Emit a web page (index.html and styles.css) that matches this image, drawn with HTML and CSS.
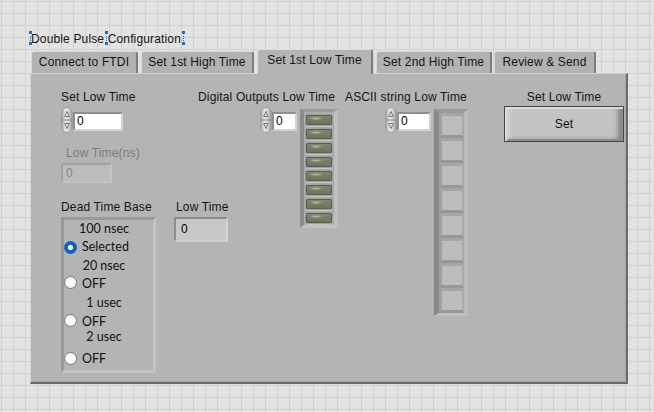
FILE: index.html
```html
<!DOCTYPE html>
<html>
<head>
<meta charset="utf-8">
<link rel="stylesheet" href="styles.css">
</head>
<body>
<div class="fp">
  <div class="title-row">
    <span class="title">Double Pulse Configuration<i class="hd hl1"></i><i class="hd hl2"></i><i class="hd hl3"></i><i class="hdl hd1"></i><i class="hdl hd2"></i><i class="hdl hd3"></i></span>
  </div>
  <div class="tabctl">
    <div class="tabs">
      <div class="tab t1">Connect to FTDI</div>
      <div class="tab t2">Set 1st High Time</div>
      <div class="tab t3 sel">Set 1st Low Time</div>
      <div class="tab t4">Set 2nd High Time</div>
      <div class="tab t5">Review &amp; Send</div>
    </div>
    <div class="page">
      <div class="colA">
        <div class="lbl">Set Low Time</div>
        <div class="numrow">
          <svg class="spin" width="12" height="26" viewBox="0 0 12 26"><defs><linearGradient id="sg1" x1="0" x2="1"><stop offset="0" stop-color="#9c9c9c"/><stop offset=".35" stop-color="#e9e9e9"/><stop offset=".7" stop-color="#d2d2d2"/><stop offset="1" stop-color="#8f8f8f"/></linearGradient></defs><rect x=".5" y=".5" width="11" height="25" rx="5.5" fill="url(#sg1)" stroke="#9d9d9d"/><line x1="1" y1="13" x2="11" y2="13" stroke="#8c8c8c"/><path d="M6 4.5 L8.3 9.5 H3.7Z" fill="none" stroke="#7a7a7a"/><path d="M6 21.5 L8.3 16.5 H3.7Z" fill="none" stroke="#7a7a7a"/></svg>
          <div class="num wA">0</div>
        </div>
        <div class="lbl dis">Low Time(ns)</div>
        <div class="disbox">0</div>
        <div class="dtrow">
          <div class="dtg">
            <div class="lbl">Dead Time Base</div>
            <div class="rbox">
              <div class="rl h18">100 nsec</div>
              <div class="ro h19"><span class="rd on m3"></span><span class="rt">Selected</span></div>
              <div class="rl h18">20 nsec</div>
              <div class="ro h19"><span class="rd m1"></span><span class="rt">OFF</span></div>
              <div class="rl h19">1 usec</div>
              <div class="ro h15"><span class="rd m1"></span><span class="rt">OFF</span></div>
              <div class="rl h22">2 usec</div>
              <div class="ro h18"><span class="rd m2"></span><span class="rt">OFF</span></div>
            </div>
          </div>
          <div class="ltg">
            <div class="lbl pl2">Low Time</div>
            <div class="ind">0</div>
          </div>
        </div>
      </div>
      <div class="colB">
        <div class="lbl">Digital Outputs Low Time</div>
        <div class="drow">
          <svg class="spin" width="12" height="26" viewBox="0 0 12 26"><defs><linearGradient id="sg2" x1="0" x2="1"><stop offset="0" stop-color="#9c9c9c"/><stop offset=".35" stop-color="#e9e9e9"/><stop offset=".7" stop-color="#d2d2d2"/><stop offset="1" stop-color="#8f8f8f"/></linearGradient></defs><rect x=".5" y=".5" width="11" height="25" rx="5.5" fill="url(#sg2)" stroke="#9d9d9d"/><line x1="1" y1="13" x2="11" y2="13" stroke="#8c8c8c"/><path d="M6 4.5 L8.3 9.5 H3.7Z" fill="none" stroke="#7a7a7a"/><path d="M6 21.5 L8.3 16.5 H3.7Z" fill="none" stroke="#7a7a7a"/></svg>
          <div class="num wB">0</div>
          <div class="ledf">
            <div class="led"></div><div class="led"></div><div class="led"></div><div class="led"></div>
            <div class="led"></div><div class="led"></div><div class="led"></div><div class="led"></div>
          </div>
        </div>
      </div>
      <div class="colC">
        <div class="lbl">ASCII string Low Time</div>
        <div class="drow">
          <svg class="spin" width="12" height="26" viewBox="0 0 12 26"><defs><linearGradient id="sg3" x1="0" x2="1"><stop offset="0" stop-color="#9c9c9c"/><stop offset=".35" stop-color="#e9e9e9"/><stop offset=".7" stop-color="#d2d2d2"/><stop offset="1" stop-color="#8f8f8f"/></linearGradient></defs><rect x=".5" y=".5" width="11" height="25" rx="5.5" fill="url(#sg3)" stroke="#9d9d9d"/><line x1="1" y1="13" x2="11" y2="13" stroke="#8c8c8c"/><path d="M6 4.5 L8.3 9.5 H3.7Z" fill="none" stroke="#7a7a7a"/><path d="M6 21.5 L8.3 16.5 H3.7Z" fill="none" stroke="#7a7a7a"/></svg>
          <div class="num wC">0</div>
          <div class="arrf">
            <div class="cell"></div><div class="cell"></div><div class="cell"></div><div class="cell"></div>
            <div class="cell"></div><div class="cell"></div><div class="cell"></div><div class="cell"></div>
          </div>
        </div>
      </div>
      <div class="colD">
        <div class="lbl center">Set Low Time</div>
        <div class="btn">Set</div>
      </div>
    </div>
  </div>
</div>
</body>
</html>
```
FILE: styles.css
```css
html, body {
  margin: 0;
  padding: 0;
}
body {
  width: 654px;
  height: 412px;
  overflow: hidden;
  background-color: #e3e3e3;
  background-image:
    linear-gradient(to right, #d1d1d1 1px, transparent 1px),
    linear-gradient(to bottom, #d1d1d1 1px, transparent 1px);
  background-size: 12px 12px;
  background-position: 1px 1px;
  font: 12px "Liberation Sans", Arial, sans-serif;
  letter-spacing: 0.15px;
  color: #141414;
}
.fp {
  padding: 31px 0 0 30px;
}
.title-row {
  height: 16px;
}
.title {
  position: relative;
  display: inline-block;
  line-height: 16px;
  padding-left: 1px;
  white-space: nowrap;
}
.hd {
  position: absolute;
  width: 3px;
  height: 3px;
  background: #1a6cd0;
}
.hdl {
  position: absolute;
  top: 5px;
  height: 5px;
  width: 0;
  border-left: 1px dotted #1a6cd0;
}
.hl1 { left: -1px; top: 0; box-shadow: 0 11px 0 #1a6cd0; }
.hl2 { left: 75px; top: 0; box-shadow: 0 11px 0 #1a6cd0; }
.hl3 { left: 152px; top: 0; box-shadow: 0 11px 0 #1a6cd0; }
.hd1 { left: 0; }
.hd2 { left: 76px; }
.hd3 { left: 153px; }

.tabs {
  display: flex;
  align-items: flex-end;
  height: 24px;
  margin-top: 2px;
  padding-left: 1px;
}
.tab {
  box-sizing: border-box;
  height: 22px;
  line-height: 21px;
  background: #b2b2b2;
  border-top: 1px solid #d9d9d9;
  border-left: 1px solid #d9d9d9;
  border-right: 2px solid #7d7d7d;
  border-radius: 3px 3px 0 0;
  text-align: center;
  white-space: nowrap;
  margin-right: 3px;
  flex: none;
}
.tab.sel {
  height: 25px;
  line-height: 20px;
  margin-bottom: -1px;
  background: #b4b4b4;
  position: relative;
  z-index: 1;
  border-top-color: #dcdcdc;
  border-left-color: #dcdcdc;
}
.t1 { width: 107px; }
.t2 { width: 113px; }
.t3 { width: 116px; }
.t4 { width: 116px; margin-right: 2px; }
.t5 { width: 102px; }

.page {
  box-sizing: border-box;
  width: 598px;
  height: 311px;
  background: #b4b4b4;
  border-top: 1px solid #d3d3d3;
  border-left: 1px solid #d3d3d3;
  border-right: 2px solid #6c6c6c;
  border-bottom: 2px solid #6c6c6c;
  box-shadow: inset -1px -1px 0 #a6a6a6;
  padding: 16px 0 0 30px;
  display: flex;
  align-items: flex-start;
}
.lbl {
  height: 14px;
  line-height: 14px;
  white-space: nowrap;
}
.lbl.center { text-align: center; }
.lbl.dis {
  margin-top: 13px;
  padding-left: 5px;
  color: #7b7b7b;
}
.pl2 { padding-left: 2px; }

.colA { width: 137px; flex: none; }
.colB { width: 140px; flex: none; }
.colC { width: 123px; flex: none; margin-left: 7px; }
.colD { width: 120px; flex: none; margin-left: 36px; }

.numrow {
  display: flex;
  align-items: flex-start;
  margin-top: 3px;
}
.drow {
  display: flex;
  align-items: flex-start;
  justify-content: flex-end;
  margin-top: 3px;
}
.spin {
  display: block;
  flex: none;
}
.num {
  box-sizing: border-box;
  margin-top: 5px;
  height: 19px;
  border: 2px solid;
  border-color: #8f8f8f #d2d2d2 #d2d2d2 #8f8f8f;
  background: #ffffff;
  line-height: 15px;
  padding-left: 2px;
  flex: none;
  color: #000;
}
.wA { width: 50px; }
.wB { width: 25px; }
.wC { width: 34px; }

.disbox {
  box-sizing: border-box;
  margin-top: 3px;
  width: 51px;
  height: 20px;
  border: 2px solid;
  border-color: #a2a2a2 #c4c4c4 #c4c4c4 #a2a2a2;
  background: #bcbcbc;
  color: #858585;
  line-height: 16px;
  padding-left: 3px;
}

.dtrow {
  display: flex;
  gap: 18px;
  margin-top: 17px;
}
.rbox {
  box-sizing: border-box;
  margin-top: 3px;
  width: 95px;
  height: 156px;
  border: 3px solid;
  border-color: #999999 #c3c3c3 #c3c3c3 #999999;
  font-family: Lato, "Liberation Sans", sans-serif;
  font-size: 12.5px;
  letter-spacing: 0;
  color: #111;
}
.rl {
  line-height: 18px;
  text-align: center;
  padding-right: 9px;
  white-space: nowrap;
}
.ro {
  display: flex;
  align-items: flex-start;
}
.h15 { height: 15px; }
.h18 { height: 18px; }
.h19 { height: 19px; }
.h22 { height: 22px; }
.rd {
  box-sizing: border-box;
  flex: none;
  width: 13px;
  height: 13px;
  border-radius: 50%;
  border: 1px solid #7e7e7e;
  background: radial-gradient(circle at 55% 45%, #ffffff 0, #f6f6f6 55%, #d8d8d8 100%);
}
.rd.on {
  border-color: #0a5db5;
  background: radial-gradient(circle, #ffffff 0, #ffffff 2.2px, #0b67c2 2.9px);
}
.m1 { margin-top: 1px; }
.m2 { margin-top: 2px; }
.m3 { margin-top: 3px; }
.rt {
  margin-left: 5px;
  line-height: 18px;
}

.ind {
  box-sizing: border-box;
  margin-top: 3px;
  width: 54px;
  height: 25px;
  border: 2px solid;
  border-color: #8e8e8e #d1d1d1 #d1d1d1 #8e8e8e;
  background: #c8c8c8;
  padding-left: 5px;
  line-height: 21px;
  color: #000;
}

.ledf {
  box-sizing: border-box;
  margin-top: 2px;
  margin-left: 3px;
  width: 38px;
  height: 119px;
  border-style: solid;
  border-width: 3px 4px 3px 4px;
  border-color: #9b9b9b #c0c0c0 #c2c2c2 #8b8b8b;
  background: #ababab;
  padding: 3px 2px 0;
  display: flex;
  flex-direction: column;
  gap: 4px;
  flex: none;
}
.led {
  box-sizing: border-box;
  height: 10px;
  border: 1px solid #56644d;
  border-radius: 1px;
  background:
    radial-gradient(ellipse 7px 1.6px at 9px 2.5px, #b8c4ae 0, rgba(184, 196, 174, 0) 100%),
    linear-gradient(#7b8970, #67755c);
  box-shadow: 0 0 0 1px #9f9f9f, 0 2px 0 0 #c4c4c4;
}

.arrf {
  box-sizing: border-box;
  margin-top: 2px;
  margin-left: 3px;
  width: 34px;
  height: 207px;
  border-style: solid;
  border-width: 4px 4px 3px 5px;
  border-color: #9a9a9a #bcbcbc #c1c1c1 #8a8a8a;
  background: #a9a9a9;
  display: flex;
  flex-direction: column;
  flex: none;
}
.cell {
  box-sizing: border-box;
  height: 25px;
  flex: none;
  border-style: solid;
  border-width: 3px 2px 3px 3px;
  border-color: #a5a5a5 #aaaaaa #979797 #a0a0a0;
  background: #bdbdbd;
}

.btn {
  box-sizing: border-box;
  margin-top: 2px;
  height: 36px;
  border: 1px solid #454545;
  background: #c3c3c3;
  box-shadow:
    inset 2px 2px 0 #dadada,
    inset -2px -2px 0 #8c8c8c,
    inset 7px 0 5px -3px #dcdcdc,
    inset -8px -4px 5px -3px #7e7e7e;
  text-align: center;
  line-height: 34px;
  color: #111;
}
```
